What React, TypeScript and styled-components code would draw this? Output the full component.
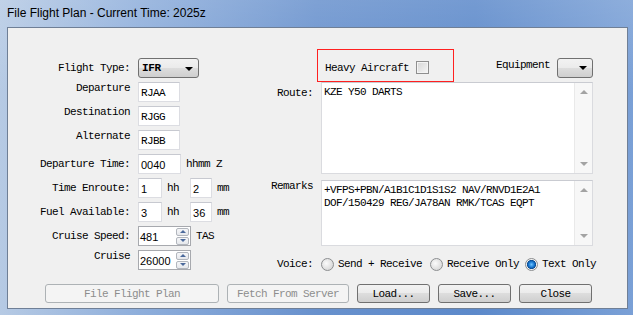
import React from 'react'
import styled, { createGlobalStyle } from 'styled-components'

const mono = `"Liberation Mono", "DejaVu Sans Mono", monospace`
const sans = `"Liberation Sans", Arial, sans-serif`

const GlobalStyle = createGlobalStyle`
  html, body {
    margin: 0;
    padding: 0;
    overflow: hidden;
  }
  #root {
    width: 633px;
    height: 315px;
  }
`

const remarks = ['+VFPS+PBN/A1B1C1D1S1S2 NAV/RNVD1E2A1', 'DOF/150429 REG/JA78AN RMK/TCAS EQPT']

export default function App() {
  return (
    <>
      <GlobalStyle />
      <Window>
        <TitleBar>File Flight Plan - Current Time: 2025z</TitleBar>
        <Client>
          <Form>
            <LeftCol>
              <Label>Flight Type:</Label>
              <Select $width={61}>
                <SelectText>IFR</SelectText>
                <DownArrow />
              </Select>

              <Label $raised>Departure</Label>
              <Field $width={42}>RJAA</Field>

              <Label $raised>Destination</Label>
              <Field $width={42}>RJGG</Field>

              <Label $raised>Alternate</Label>
              <Field $width={42}>RJBB</Field>

              <Label>Departure Time:</Label>
              <InlineRow>
                <Field $width={43} $numeric>0040</Field>
                <Unit>hhmm Z</Unit>
              </InlineRow>

              <Label>Time Enroute:</Label>
              <InlineRow>
                <Field $width={24} $numeric>1</Field>
                <Unit $gapAfter={11}>hh</Unit>
                <Field $width={22} $numeric>2</Field>
                <Unit>mm</Unit>
              </InlineRow>

              <Label>Fuel Available:</Label>
              <InlineRow>
                <Field $width={24} $numeric>3</Field>
                <Unit $gapAfter={11}>hh</Unit>
                <Field $width={22} $numeric>36</Field>
                <Unit>mm</Unit>
              </InlineRow>

              <Label>Cruise Speed:</Label>
              <InlineRow>
                <Spinner value="481" />
                <Unit>TAS</Unit>
              </InlineRow>

              <Label $raised>Cruise</Label>
              <Spinner value="26000" />
            </LeftCol>

            <RightCol>
              <TopRow>
                <HeavyBox>
                  <span>Heavy Aircraft</span>
                  <CheckBox />
                </HeavyBox>
                <EquipLabel>Equipment</EquipLabel>
                <Select $width={36} $drop={4}>
                  <SelectText />
                  <DownArrow />
                </Select>
              </TopRow>

              <SideLabel $pad={5}>Route:</SideLabel>
              <TextBox $height={92}>
                <TextContent>KZE Y50 DARTS</TextContent>
                <ScrollTrack>
                  <UpArrow />
                  <DownSmall />
                </ScrollTrack>
              </TextBox>

              <SideLabel $pad={0} $top={6}>Remarks</SideLabel>
              <TextBox $height={66} $top={6}>
                <TextContent>
                  {remarks.map((line) => (
                    <div key={line}>{line}</div>
                  ))}
                </TextContent>
                <ScrollTrack>
                  <UpArrow />
                  <DownSmall />
                </ScrollTrack>
              </TextBox>

              <SideLabel $pad={1} $top={11}>Voice:</SideLabel>
              <VoiceRow>
                <Radio />
                <RadioText $gap={8}>Send + Receive</RadioText>
                <Radio />
                <RadioText $gap={6}>Receive Only</RadioText>
                <Radio $checked />
                <RadioText>Text Only</RadioText>
              </VoiceRow>
            </RightCol>
          </Form>

          <ButtonBar>
            <Button $width={174} disabled>File Flight Plan</Button>
            <Button $width={122} disabled>Fetch From Server</Button>
            <Button $width={73}>Load...</Button>
            <Button $width={73}>Save...</Button>
            <Button $width={73}>Close</Button>
          </ButtonBar>
        </Client>
      </Window>
    </>
  )
}

const Spinner = ({ value }: { value: string }) => (
  <SpinBox>
    <SpinValue>{value}</SpinValue>
    <SpinButtons>
      <SpinButton>
        <SpinUp />
      </SpinButton>
      <SpinButton>
        <SpinDown />
      </SpinButton>
    </SpinButtons>
  </SpinBox>
)

const Window = styled.div`
  width: 633px;
  height: 315px;
  display: flex;
  flex-direction: column;
  box-sizing: border-box;
  background:
    linear-gradient(180deg, rgba(255, 255, 255, 0.15) 0%, rgba(255, 255, 255, 0) 30%),
    linear-gradient(90deg, #b6cae4 0%, #8eaedb 22%, #6891cd 50%, #5c89ca 75%, #7aa0d6 100%);
`
const TitleBar = styled.div`
  height: 27px;
  padding-left: 7px;
  padding-bottom: 1px;
  display: flex;
  align-items: center;
  box-sizing: border-box;
  font-family: ${sans};
  font-size: 12px;
  color: #000;
`
const Client = styled.div`
  flex: 1;
  margin: 0 5px 6px 7px;
  border: 1px solid #6f7f96;
  background: #f0f0f0;
  display: flex;
  flex-direction: column;
  font-family: ${mono};
  font-size: 11px;
  letter-spacing: -0.6px;
  color: #000;
`
const Form = styled.div`
  display: flex;
  align-items: flex-start;
`
const LeftCol = styled.div`
  width: 252px;
  flex-shrink: 0;
  padding-top: 30px;
  display: grid;
  grid-template-columns: 122px auto;
  grid-auto-rows: 20px;
  column-gap: 8px;
  row-gap: 4px;
  align-items: center;
`
const Label = styled.div<{ $raised?: boolean }>`
  text-align: right;
  white-space: nowrap;
  line-height: 12px;
  align-self: ${({ $raised }) => ($raised ? 'start' : 'center')};
`
const InlineRow = styled.div`
  display: flex;
  align-items: center;
  height: 20px;
  white-space: nowrap;
`
const Field = styled.div<{ $width: number; $numeric?: boolean }>`
  width: ${({ $width }) => $width}px;
  height: 20px;
  flex-shrink: 0;
  box-sizing: border-box;
  border: 1px solid #dcdde2;
  border-top-color: #c7c9d0;
  background: #fff;
  padding: 2px 2px 0;
  display: flex;
  align-items: center;
  font-family: ${({ $numeric }) => ($numeric ? sans : mono)};
  font-size: 11px;
  letter-spacing: ${({ $numeric }) => ($numeric ? '0' : '-0.6px')};
`
const Unit = styled.span<{ $gapAfter?: number }>`
  margin-left: 5px;
  margin-right: ${({ $gapAfter }) => $gapAfter ?? 0}px;
`
const Select = styled.div<{ $width: number; $drop?: number }>`
  width: ${({ $width }) => $width}px;
  height: 20px;
  flex-shrink: 0;
  box-sizing: border-box;
  margin-top: ${({ $drop }) => $drop ?? 0}px;
  border: 1px solid #707070;
  border-radius: 3px;
  background: linear-gradient(180deg, #f2f2f2 0%, #ebebeb 49%, #dddddd 50%, #cfcfcf 100%);
  display: flex;
  align-items: center;
  justify-content: space-between;
  padding: 0 5px 0 3px;
`
const SelectText = styled.span`
  font-weight: bold;
  letter-spacing: -0.4px;
`
const DownArrow = styled.span`
  width: 0;
  height: 0;
  border-left: 4px solid transparent;
  border-right: 4px solid transparent;
  border-top: 4px solid #000;
  margin-top: 1px;
`
const SpinBox = styled.div`
  width: 53px;
  height: 20px;
  flex-shrink: 0;
  box-sizing: border-box;
  border: 1px solid #a7a9ae;
  background: #fff;
  display: flex;
  align-items: center;
  justify-content: space-between;
  padding: 1px;
`
const SpinValue = styled.span`
  font-family: ${sans};
  font-size: 11px;
  letter-spacing: 0;
  padding-top: 1px;
`
const SpinButtons = styled.div`
  width: 13px;
  height: 17px;
  display: flex;
  flex-direction: column;
  gap: 1px;
`
const SpinButton = styled.div`
  flex: 1;
  box-sizing: border-box;
  border: 1px solid #b2b6bd;
  border-radius: 2px;
  background: linear-gradient(180deg, #f5f6f8 0%, #e6e8ec 100%);
  display: flex;
  align-items: center;
  justify-content: center;
`
const SpinUp = styled.span`
  border-left: 3px solid transparent;
  border-right: 3px solid transparent;
  border-bottom: 3px solid #4c6a9c;
`
const SpinDown = styled.span`
  border-left: 3px solid transparent;
  border-right: 3px solid transparent;
  border-top: 3px solid #4c6a9c;
`
const RightCol = styled.div`
  padding-top: 21px;
  display: grid;
  grid-template-columns: 53px 272px;
  column-gap: 8px;
`
const TopRow = styled.div`
  grid-column: 2;
  height: 33px;
  margin-left: -4px;
  display: flex;
  align-items: center;
  white-space: nowrap;
`
const HeavyBox = styled.div`
  width: 137px;
  height: 33px;
  box-sizing: border-box;
  border: 1px solid #ff2020;
  display: flex;
  align-items: center;
  gap: 7px;
  padding: 4px 0 0 7px;
`
const CheckBox = styled.span`
  width: 13px;
  height: 13px;
  box-sizing: border-box;
  border: 1px solid #8f8f8f;
  background: linear-gradient(135deg, #d6d6d6 0%, #f6f6f6 100%);
  box-shadow: inset 0 0 0 1px #f4f4f4;
`
const EquipLabel = styled.span`
  margin-left: auto;
  margin-right: 7px;
  margin-bottom: 2px;
`
const SideLabel = styled.div<{ $pad: number; $top?: number }>`
  grid-column: 1;
  text-align: right;
  white-space: nowrap;
  padding-top: ${({ $pad }) => $pad}px;
  margin-top: ${({ $top }) => $top ?? 0}px;
  line-height: 12px;
`
const TextBox = styled.div<{ $height: number; $top?: number }>`
  grid-column: 2;
  height: ${({ $height }) => $height}px;
  margin-top: ${({ $top }) => $top ?? 0}px;
  box-sizing: border-box;
  border: 1px solid #dadbdf;
  border-top-color: #c9cbd1;
  background: #fff;
  display: flex;
`
const TextContent = styled.div`
  flex: 1;
  padding: 3px 2px;
  line-height: 13px;
  white-space: pre;
`
const ScrollTrack = styled.div`
  width: 17px;
  background: #f7f7f7;
  border-left: 1px solid #e9e9e9;
  display: flex;
  flex-direction: column;
  align-items: center;
  justify-content: space-between;
  padding: 7px 0;
`
const UpArrow = styled.span`
  border-left: 4px solid transparent;
  border-right: 4px solid transparent;
  border-bottom: 4px solid #a3a3a3;
`
const DownSmall = styled.span`
  border-left: 4px solid transparent;
  border-right: 4px solid transparent;
  border-top: 4px solid #a3a3a3;
`
const VoiceRow = styled.div`
  grid-column: 2;
  margin-top: 10px;
  height: 16px;
  display: flex;
  align-items: center;
  white-space: nowrap;
`
const Radio = styled.span<{ $checked?: boolean }>`
  width: 13px;
  height: 13px;
  flex-shrink: 0;
  box-sizing: border-box;
  border-radius: 50%;
  border: 1px solid #8c8e90;
  background: ${({ $checked }) =>
    $checked
      ? 'radial-gradient(circle, #6fc4ff 0%, #1a7ad4 35%, #0b4c92 55%, #f2f2f2 62%, #e0e0e0 100%)'
      : 'radial-gradient(circle at 40% 40%, #fbfbfb 0%, #e4e4e4 50%, #cfcfcf 100%)'};
`
const RadioText = styled.span<{ $gap?: number }>`
  flex-shrink: 0;
  margin-left: 4px;
  margin-right: ${({ $gap }) => $gap ?? 0}px;
`
const ButtonBar = styled.div`
  margin-top: 12px;
  padding-left: 37px;
  display: flex;
  gap: 8px;
`
const Button = styled.button<{ $width: number }>`
  width: ${({ $width }) => $width}px;
  height: 19px;
  box-sizing: border-box;
  padding: 0;
  border: 1px solid #707070;
  border-radius: 3px;
  background: linear-gradient(180deg, #f2f2f2 0%, #ebebeb 49%, #dddddd 50%, #cfcfcf 100%);
  font-family: ${mono};
  font-size: 11px;
  letter-spacing: -0.6px;
  color: #000;

  &:disabled {
    border-color: #adb2b5;
    background: #f4f4f4;
    color: #8d8d8d;
  }
`
